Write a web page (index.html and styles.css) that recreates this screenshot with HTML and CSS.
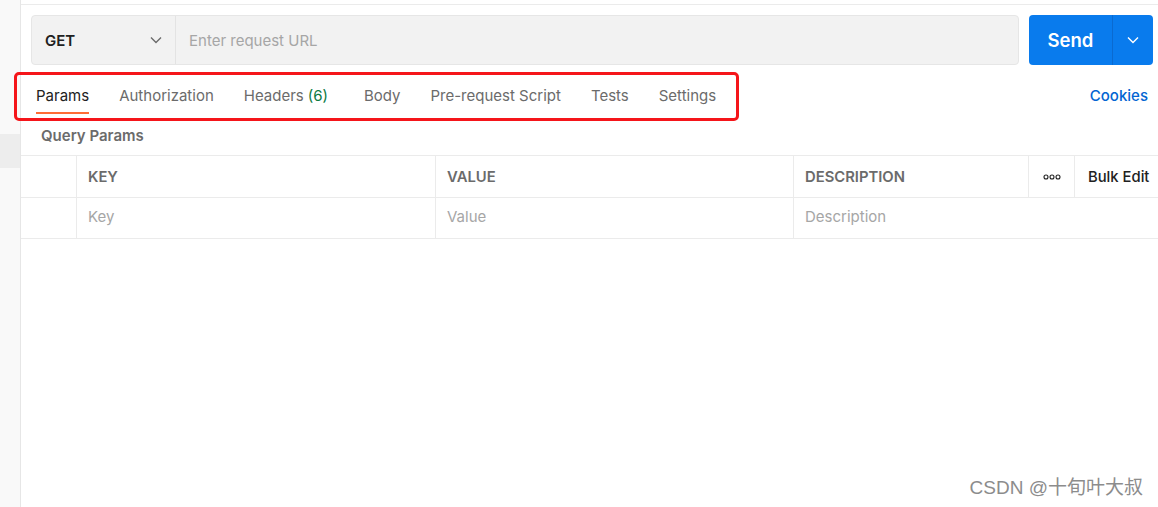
FILE: index.html
```html
<!DOCTYPE html>
<html lang="en">
<head>
<meta charset="utf-8">
<title>Request</title>
<link rel="stylesheet" href="styles.css">
</head>
<body>
<div class="app">
  <aside class="sidebar">
    <div class="side-item"></div>
  </aside>
  <main class="main">
    <div class="topstrip"></div>
    <div class="urlrow">
      <div class="urlbar">
        <div class="method">
          <span class="method-name">GET</span>
          <svg class="chev" width="12" height="8" viewBox="0 0 12 8"><path d="M1 1.5 L6 6.5 L11 1.5" fill="none" stroke="#6b6b6b" stroke-width="1.4"/></svg>
        </div>
        <div class="url">Enter request URL</div>
      </div>
      <div class="send">
        <span class="send-label">Send</span>
        <span class="send-drop">
          <svg width="12" height="8" viewBox="0 0 12 8"><path d="M1 1.5 L6 6.5 L11 1.5" fill="none" stroke="#ffffff" stroke-width="1.4"/></svg>
        </span>
      </div>
    </div>
    <div class="tabrow">
      <nav class="tabs">
        <span class="tab active">Params</span>
        <span class="tab">Authorization</span>
        <span class="tab">Headers <span class="count">(6)</span></span>
        <span class="tab">Body</span>
        <span class="tab">Pre-request Script</span>
        <span class="tab">Tests</span>
        <span class="tab">Settings</span>
      </nav>
      <span class="cookies">Cookies</span>
    </div>
    <div class="qp">Query Params</div>
    <div class="table">
      <div class="cell first head"></div>
      <div class="cell head">KEY</div>
      <div class="cell head">VALUE</div>
      <div class="cell head">DESCRIPTION</div>
      <div class="cell head dots">
        <svg width="18" height="6" viewBox="0 0 18 6"><circle cx="3" cy="3" r="2" fill="none" stroke="#212121" stroke-width="1.1"/><circle cx="9" cy="3" r="2" fill="none" stroke="#212121" stroke-width="1.1"/><circle cx="15" cy="3" r="2" fill="none" stroke="#212121" stroke-width="1.1"/></svg>
      </div>
      <div class="cell head bulk">Bulk Edit</div>
      <div class="cell first"></div>
      <div class="cell ph">Key</div>
      <div class="cell ph">Value</div>
      <div class="cell ph span3">Description</div>
    </div>
  </main>
</div>
<div class="annot"></div>
<div class="watermark">CSDN @十旬叶大叔</div>
</body>
</html>
```
FILE: styles.css
```css
* { box-sizing: border-box; }
html, body { margin: 0; padding: 0; }
body {
  width: 1158px;
  height: 507px;
  overflow: hidden;
  position: relative;
  background: #ffffff;
  font-family: Inter, "Noto Sans", sans-serif;
  color: #212121;
}
.app { display: flex; height: 507px; }
.sidebar {
  width: 21px;
  flex: none;
  background: #f9f9f9;
  border-right: 1px solid #e6e6e6;
}
.side-item {
  margin-top: 134px;
  height: 34px;
  background: #ededed;
}
.main { flex: 1; display: flex; flex-direction: column; min-width: 0; }
.topstrip { height: 5px; border-bottom: 1px solid #ebebeb; }
.urlrow {
  display: flex;
  gap: 10px;
  padding: 10px 5px 0 10px;
}
.urlbar {
  flex: 1;
  display: flex;
  height: 50px;
  background: #f2f2f2;
  border: 1px solid #e6e6e6;
  border-radius: 4px;
}
.method {
  width: 144px;
  display: flex;
  align-items: center;
  justify-content: space-between;
  padding: 0 13px 0 13px;
  border-right: 1px solid #e3e3e3;
}
.method-name { font-size: 15px; font-weight: 600; color: #212121; }
.url {
  display: flex;
  align-items: center;
  padding-left: 13px;
  font-size: 15px;
  color: #a6a6a6;
}
.send {
  width: 124px;
  height: 50px;
  display: flex;
  background: #097bed;
  border-radius: 4px;
  color: #fff;
}
.send-label {
  width: 84px;
  display: flex;
  align-items: center;
  justify-content: center;
  font-size: 18.5px;
  font-weight: 600;
  border-right: 1px solid #0a6ad0;
}
.send-drop { flex: 1; display: flex; align-items: center; justify-content: center; }
.tabrow {
  display: flex;
  justify-content: space-between;
  align-items: flex-start;
  margin-top: 11px;
  padding: 0 10px 0 15px;
  height: 38px;
}
.tabs { display: flex; gap: 30px; }
.tab {
  height: 38px;
  display: flex;
  align-items: center;
  gap: 4px;
  font-size: 15px;
  color: #6b6b6b;
  border-bottom: 2px solid transparent;
  padding-top: 2px;
}
.tab.active { color: #212121; border-bottom-color: #ff6c37; }
.count { color: #0c7a43; margin-right: 6px; }
.cookies {
  height: 38px;
  display: flex;
  align-items: center;
  padding-top: 0;
  font-size: 15px;
  font-weight: 500;
  color: #0265d2;
}
.qp {
  height: 41px;
  padding: 12px 0 0 20px;
  line-height: 20px;
  font-size: 15px;
  font-weight: 600;
  color: #6b6b6b;
}
.table {
  display: grid;
  grid-template-columns: 55px 359px 358px 235px 46px 1fr;
  border-top: 1px solid #ebebeb;
}
.cell {
  height: 41px;
  display: flex;
  align-items: center;
  padding-left: 11px;
  border-bottom: 1px solid #ebebeb;
  border-left: 1px solid #ebebeb;
  font-size: 14.8px;
}
.cell.first { border-left: none; }
.head { height: 42px; font-weight: 600; color: #6b6b6b; }
.dots { justify-content: center; padding-left: 0; }
.bulk { color: #212121; padding-left: 13px; font-weight: 500; }
.ph { color: #a6a6a6; font-weight: 400; font-size: 15px; padding-bottom: 3px; }
.span3 { grid-column: span 3; }
.annot {
  position: absolute;
  left: 14px;
  top: 72px;
  width: 725px;
  height: 49px;
  border: 3px solid #f5151a;
  border-radius: 5px;
}
.watermark {
  position: absolute;
  right: 15px;
  bottom: 8px;
  font-family: "Liberation Sans", "Noto Sans CJK SC", sans-serif;
  font-size: 19px;
  color: #8c8c8c;
  text-shadow: 0 0 1px #ffffff;
}
```
